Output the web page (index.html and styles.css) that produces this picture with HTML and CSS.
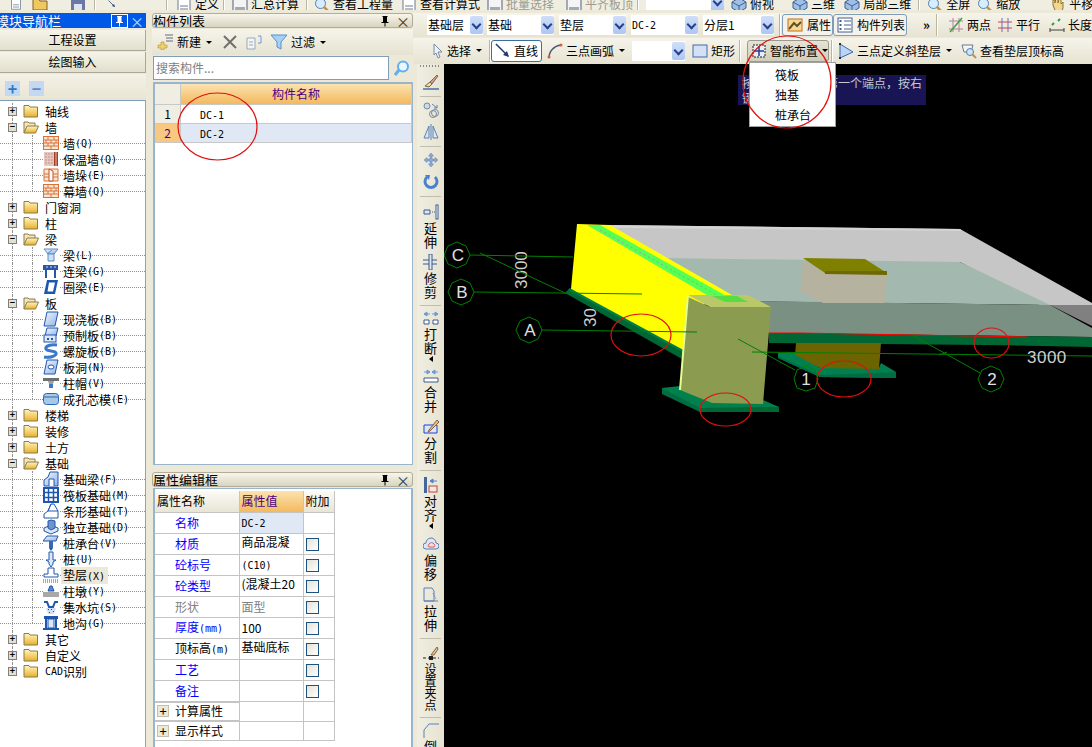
FILE: index.html
```html
<!DOCTYPE html>
<html lang="zh">
<head>
<meta charset="utf-8">
<title>GCL</title>
<link rel="stylesheet" href="styles.css">
</head>
<body>
<svg class="defs" xmlns="http://www.w3.org/2000/svg">
<defs>
<linearGradient id="fy" x1="0" y1="0" x2="0" y2="1"><stop offset="0" stop-color="#fff6c0"/><stop offset="1" stop-color="#e8b028"/></linearGradient>
<linearGradient id="bl" x1="0" y1="0" x2="1" y2="1"><stop offset="0" stop-color="#f4f8ff"/><stop offset="1" stop-color="#8fb2e6"/></linearGradient>
<symbol id="pin" viewBox="0 0 11 12"><path d="M3 1h5v1H7.500v5H9v1H6v3.500H5V8H2V7h1.500V2H3z" fill="currentColor"/></symbol>
<symbol id="folder" viewBox="0 0 16 14"><path d="M1 3V1.500h5L7 3h7.500v10H1z" fill="url(#fy)" stroke="#8a7a50"/></symbol>
<symbol id="folder-open" viewBox="0 0 16 14"><path d="M1 13V2h4l1 1h6v3" fill="#f6e8b8" stroke="#8a7a50"/><path d="M1 13l3-7h11.500l-3 7z" fill="url(#fy)" stroke="#8a7a50"/></symbol>
<symbol id="brick" viewBox="0 0 16 16"><rect x=".5" y="1.500" width="15" height="13" fill="#fbe6d2" stroke="#d8703a"/><path d="M1 5h14M1 8h14M1 11h14M5 1.500V5M11 1.500V5M8 5v3M3 5v3M13 5v3M5 8v3M11 8v3M8 11v3" stroke="#d8703a" fill="none"/></symbol>
<symbol id="i-insul" viewBox="0 0 16 16"><rect x="1" y="1" width="10" height="14" fill="#e6c8c0"/><path d="M3 2v12M6 2v12M9 2v12" stroke="#c09088" stroke-dasharray="2 1"/><rect x="11" y="1" width="4" height="14" fill="#a04020"/><path d="M13 1v14" stroke="#e8c0a0"/></symbol>
<symbol id="i-pier" viewBox="0 0 16 16"><path d="M1 2h14v12H1z" fill="#fbe6d2" stroke="#d8703a"/><path d="M6 2l4 2v10H6z" fill="#fff" stroke="#c05020"/><path d="M1 7h5M10 7h5M1 10h5M10 10h5" stroke="#d8703a"/></symbol>
<symbol id="i-beam" viewBox="0 0 16 16"><path d="M1 2h14l-4 5H5z" fill="url(#bl)" stroke="#5a8cc8"/><path d="M5 7h6v7H5z" fill="#cfe0f6" stroke="#5a8cc8"/><path d="M9 3l-5 4" stroke="#5a8cc8"/></symbol>
<symbol id="i-link" viewBox="0 0 16 16"><rect x="0" y="2" width="15" height="5" fill="#2a56a8"/><path d="M3 4h2M7 4h2M11 4h2" stroke="#cfe0f6"/><path d="M3 7v8M12 7v8" stroke="#2a56a8" stroke-width="2"/></symbol>
<symbol id="i-ring" viewBox="0 0 16 16"><path d="M4 1h11l-3 14H1z" fill="#1f56b0"/><path d="M6 3.500h6l-2 9H4.500z" fill="#fff"/></symbol>
<symbol id="i-slab" viewBox="0 0 16 16"><path d="M4 1h11l-3 14H1z" fill="url(#bl)" stroke="#1f56b0"/></symbol>
<symbol id="i-pre" viewBox="0 0 16 16"><path d="M4 1h11l-2 8H2z" fill="url(#bl)" stroke="#1f56b0"/><rect x="1" y="8" width="12" height="7" fill="#dce8f8" stroke="#1f56b0"/><path d="M4 11h2v2H4zM8 11h2v2H8z" fill="#1f56b0"/></symbol>
<symbol id="i-spiral" viewBox="0 0 16 16"><path d="M14 2C8 1 2 3 3 6s9 1 10 4-6 5-12 4" fill="none" stroke="#3a78c8" stroke-width="3"/></symbol>
<symbol id="i-hole" viewBox="0 0 16 16"><path d="M4 1h11l-3 14H1z" fill="url(#bl)" stroke="#1f56b0"/><ellipse cx="8" cy="8" rx="3" ry="2" fill="#fff" stroke="#1f56b0"/></symbol>
<symbol id="i-cap" viewBox="0 0 16 16"><rect x="0" y="3" width="16" height="3" fill="#707070"/><path d="M5 6h6l-1 3H6z" fill="#a0a0a0"/><rect x="6" y="9" width="4" height="4" fill="#3a78c8"/></symbol>
<symbol id="i-core" viewBox="0 0 16 16"><rect x="0.500" y="2.500" width="15" height="11" rx="3" fill="#a8c8e8" stroke="#2a66b0"/><path d="M1 6h14" stroke="#2a66b0"/></symbol>
<symbol id="i-fbeam" viewBox="0 0 16 16"><path d="M1 15V9l4-3 2-5h8v14z" fill="url(#bl)" stroke="#1f56b0"/><path d="M6 15V8h5v7" fill="#fff" stroke="#1f56b0"/></symbol>
<symbol id="i-raft" viewBox="0 0 16 16"><rect x="1" y="1" width="14" height="14" fill="#fff" stroke="#1f56b0" stroke-width="2"/><path d="M1 5.500h14M1 10.500h14M5.500 1v14M10.500 1v14" stroke="#1f56b0" stroke-width="1.500"/></symbol>
<symbol id="i-strip" viewBox="0 0 16 16"><path d="M1 15v-4l4-3 3-7h3l4 7v7z" fill="#fff" stroke="#1f56b0"/><path d="M8 1l-3 7h10" fill="none" stroke="#1f56b0"/></symbol>
<symbol id="i-iso" viewBox="0 0 16 16"><path d="M1 9l7-3 7 3v3l-7 3-7-3z" fill="#dce8f8" stroke="#1f56b0"/><path d="M5 2l3-1 4 1v7l-4 2-3-2z" fill="#6f94c8" stroke="#1f56b0"/></symbol>
<symbol id="i-pcap" viewBox="0 0 16 16"><path d="M4 1h11l-2 5H0z" fill="url(#bl)" stroke="#1f56b0"/><rect x="6" y="6" width="4" height="7" fill="#3a68b0"/><path d="M6 13h4l-2 3z" fill="#1f56b0"/></symbol>
<symbol id="i-pile" viewBox="0 0 16 16"><path d="M6 1h4v8h3l-3 2v2l-2 3-2-3v-2l-3-2h3z" fill="#dce8f8" stroke="#1f56b0"/></symbol>
<symbol id="i-cush" viewBox="0 0 16 16"><path d="M5 1h6v6h4v3H1V7h4z" fill="#fff" stroke="#1f56b0"/><path d="M0 13h16" stroke="#1f56b0" stroke-dasharray="1 1"/><path d="M0 15h16" stroke="#1f56b0" stroke-dasharray="1 1"/></symbol>
<symbol id="i-cpier" viewBox="0 0 16 16"><path d="M5 8l2-5h2l2 5z" fill="#5a86d0" stroke="#1f56b0"/><rect x="0" y="9" width="16" height="5" fill="#a8a8a8"/></symbol>
<symbol id="i-sump" viewBox="0 0 16 16"><path d="M1 3h3l2 5h4l2-5h3" fill="none" stroke="#1f56b0" stroke-width="2"/><path d="M3 9h10l-2 6H5z" fill="#cfe0f6"/><path d="M5 10l1 1M8 10l1 1M10 12l1 1M6 13l1 1" stroke="#1f56b0"/></symbol>
<symbol id="i-ditch" viewBox="0 0 16 16"><path d="M1 1h14v3H1zM0 13h16v2H0z" fill="#1f56b0"/><path d="M3 4v9M13 4v9" stroke="#1f56b0" stroke-width="2"/><rect x="5" y="4" width="6" height="9" fill="#dce8f8" stroke="#1f56b0"/></symbol>
<symbol id="t-doc" viewBox="0 0 16 16"><path d="M2 1h12v14H2z" fill="#fff" stroke="#6a7a90"/><path d="M4 9h8M4 12h8" stroke="#6a7a90"/></symbol>
<symbol id="t-folder" viewBox="0 0 16 16"><path d="M1 5V2h5l2 3h7v9H1z" fill="#f0c860" stroke="#806020"/></symbol>
<symbol id="t-save" viewBox="0 0 16 16"><path d="M1 1h14v14H1z" fill="#6a78a8"/><rect x="4" y="8" width="8" height="7" fill="#dfe4f0"/></symbol>
<symbol id="t-calc" viewBox="0 0 16 16"><rect x="1" y="1" width="14" height="14" fill="#f4f4f4" stroke="#506080"/><path d="M3 11h10M3 13h10" stroke="#506080"/></symbol>
<symbol id="t-3d" viewBox="0 0 16 16"><path d="M8 1l7 4v6l-7 4-7-4V5z" fill="#9ec0e8" stroke="#406090"/><path d="M1 5l7 4 7-4M8 9v6" stroke="#406090" fill="none"/></symbol>
<symbol id="t-zoom" viewBox="0 0 16 16"><circle cx="6.500" cy="6.500" r="5" fill="#d8ecff" stroke="#5080b0"/><path d="M10 10l5 5" stroke="#c89040" stroke-width="2.500"/></symbol>
<symbol id="t-hand" viewBox="0 0 16 16"><path d="M3 8V3l2 0v3l1-5h2v5l1-4h2v5l2-2v6l-2 5H6z" fill="#f0d890" stroke="#907030"/></symbol>
<symbol id="t-prop" viewBox="0 0 16 16"><rect x="1" y="2" width="14" height="12" fill="#f8d890" stroke="#c07020"/><path d="M2 12l5-6 3 3 4-4" stroke="#605030" stroke-width="2" fill="none"/></symbol>
<symbol id="t-list" viewBox="0 0 16 16"><rect x="1" y="1" width="14" height="14" fill="#fff" stroke="#406090"/><path d="M2.500 4h2M2.500 8h2M2.500 12h2" stroke="#406090" stroke-width="2"/><path d="M7 4h7M7 8h7M7 12h7" stroke="#406090"/></symbol>
<symbol id="t-two" viewBox="0 0 16 16"><path d="M1 4h14M1 12h14M5 1v14M11 1v14" stroke="#b080a0" fill="none"/><path d="M2 15L14 1" stroke="#40a040" stroke-width="1.500"/></symbol>
<symbol id="t-par" viewBox="0 0 16 16"><path d="M1 5h14M1 11h14" stroke="#d04040"/><path d="M5 1v14M11 1v14" stroke="#6a70c0"/></symbol>
<symbol id="t-len" viewBox="0 0 16 16"><path d="M1 11v4M15 11v4M1 13h14" stroke="#404040" fill="none"/><path d="M3 8l2-2M9 4l2-2" stroke="#20a040" stroke-width="2"/></symbol>
<symbol id="t-select" viewBox="0 0 16 16"><path d="M4 1l8 8H8l2 5-2 1-2-5-2 2z" fill="#eef2fa" stroke="#7a8aa8"/></symbol>
<symbol id="t-line" viewBox="0 0 16 16"><path d="M1 1l12 12" stroke="#1c3c70" stroke-width="1.500"/><path d="M14 14l-6-2 4-4z" fill="#1c3c70"/></symbol>
<symbol id="t-arc" viewBox="0 0 16 16"><path d="M2 15C2 8 7 3 14 2" fill="none" stroke="#505a70" stroke-width="1.500"/><circle cx="2" cy="14" r="1.500" fill="#d06040"/><circle cx="14" cy="2" r="1.500" fill="#d06040"/></symbol>
<symbol id="t-rect" viewBox="0 0 16 16"><rect x="1" y="2" width="14" height="12" fill="#d4e0f6" stroke="#406ab0"/></symbol>
<symbol id="t-smart" viewBox="0 0 16 16"><rect x="2" y="2" width="12" height="12" fill="#e8eef8" stroke="#202020" stroke-dasharray="2 1"/><path d="M8 3v10M3 8h10" stroke="#204090" stroke-width="1.500"/></symbol>
<symbol id="t-tri" viewBox="0 0 16 16"><path d="M2 1l13 8-13 6z" fill="#bcd4f4" stroke="#3a68b0"/><rect x="1" y="0" width="2" height="2" fill="#303030"/><rect x="1" y="14" width="2" height="2" fill="#303030"/></symbol>
<symbol id="t-view" viewBox="0 0 16 16"><path d="M1 2h11l-2 7H3z" fill="#f4f4f4" stroke="#6a7a90"/><circle cx="9" cy="9" r="3.500" fill="#cfe4fa" stroke="#5080b0"/><path d="M11.500 11.500L15 15" stroke="#c89040" stroke-width="2"/></symbol>
<symbol id="v-brush" viewBox="0 0 16 16"><path d="M14 1l-7 7 2 2 6-8z" fill="#d0a060" stroke="#8060a0"/><path d="M7 8l-5 4 4 1 3-3z" fill="#f0e0a0" stroke="#806040"/><path d="M0 15h16" stroke="#4a70a8" stroke-width="1.500"/></symbol>
<symbol id="v-circ" viewBox="0 0 16 16"><circle cx="4" cy="4" r="3" fill="#ccd8ea" stroke="#7a8aa0"/><circle cx="10" cy="12" r="3.500" fill="none" stroke="#7a8aa0"/><circle cx="12" cy="11" r="3.500" fill="none" stroke="#7a8aa0"/><path d="M9 2l5 4M14 3v3h-3" stroke="#6080b0" fill="none"/></symbol>
<symbol id="v-mirror" viewBox="0 0 16 16"><path d="M6 2L1 14h5zM10 2l5 12h-5z" fill="#dbe6f6" stroke="#5a80b8"/><path d="M8 0v16" stroke="#5a80b8"/></symbol>
<symbol id="v-move" viewBox="0 0 16 16"><path d="M8 1l2.500 3H9v3h3V5.500L15 8l-3 2.500V9H9v3h1.500L8 15l-2.500-3H7V9H4v1.500L1 8l3-2.500V7h3V4H5.500z" fill="#8aa8d0" stroke="#6080b0" stroke-width=".5"/></symbol>
<symbol id="v-rot" viewBox="0 0 16 16"><path d="M4 3a6 6 0 1 0 8 0" fill="none" stroke="#4a80d0" stroke-width="3"/><path d="M2 1l5 0-1 5z" fill="#4a80d0"/></symbol>
<symbol id="v-ext" viewBox="0 0 16 16"><path d="M1 6h6v4H1z" fill="#dbe6f6" stroke="#3a5a90"/><path d="M9 8h3" stroke="#3a5a90" stroke-dasharray="1 1"/><rect x="13" y="1" width="2" height="14" fill="#fff" stroke="#3a5a90"/></symbol>
<symbol id="v-trim" viewBox="0 0 16 16"><path d="M0 6h14M0 10h14" stroke="#3a5a90"/><rect x="6" y="0" width="3" height="16" fill="#dbe6f6" stroke="#3a5a90"/></symbol>
<symbol id="v-break" viewBox="0 0 16 16"><path d="M7 4L1 4M1 4l3-2v4zM9 4h6M15 4l-3-2v4z" fill="#6a9ad8" stroke="#6a9ad8"/><path d="M1 10h5v4H1zM10 10h5v4h-5z" fill="#fff" stroke="#3a5a90"/></symbol>
<symbol id="v-merge" viewBox="0 0 16 16"><path d="M1 4h6M7 4L4 2v4zM15 4H9M9 4l3-2v4z" fill="#6a9ad8" stroke="#6a9ad8"/><path d="M1 10h14v4H1z" fill="#fff" stroke="#3a5a90"/></symbol>
<symbol id="v-split" viewBox="0 0 16 16"><path d="M1 6h13v8H1z" fill="#dbe6f6" stroke="#2040d0"/><path d="M14 1L6 11l-1 2 2-1 9-9z" fill="#f0c080" stroke="#806040"/></symbol>
<symbol id="v-align" viewBox="0 0 16 16"><rect x="1" y="0" width="3" height="16" fill="#40689a"/><path d="M14 4H7M7 4l3-2v4z" stroke="#5a80c8" fill="#5a80c8"/><rect x="6" y="9" width="8" height="6" fill="#f8e8e0" stroke="#c04040"/></symbol>
<symbol id="v-off" viewBox="0 0 16 16"><path d="M3 13a3 3 0 0 1 0-6 5 5 0 0 1 10 0 3 3 0 0 1 0 6z" fill="#dbe6f6" stroke="#5a80b8"/><path d="M6 11a2 2 0 0 1 0-3 3 3 0 0 1 5 0 2 2 0 0 1 0 3z" fill="#f8dcd8" stroke="#d06060"/></symbol>
<symbol id="v-stretch" viewBox="0 0 16 16"><path d="M1 1h8l2 3v10H1zM1 14h14" fill="none" stroke="#5a80b8"/><path d="M10 6l3 6" stroke="#5a80b8" stroke-dasharray="1 1"/></symbol>
<symbol id="v-grip" viewBox="0 0 16 16"><path d="M0 12h16" stroke="#202020" stroke-dasharray="3 2"/><rect x="6" y="10" width="4" height="4" fill="#202020"/><path d="M14 1L8 9l3 0 4-6z" fill="#e8c890" stroke="#806040"/></symbol>
<symbol id="v-chamfer" viewBox="0 0 16 16"><path d="M1 16V8l5-6h10" fill="none" stroke="#5a80b8"/></symbol>
</defs>
</svg>

<div class="app">
  <header class="topbar">
    <svg class="ti w12 ml-10"><use href="#t-doc"/></svg>
    <svg class="ti ml-10"><use href="#t-folder"/></svg>
    <svg class="ti ml-22"><use href="#t-save"/></svg>
    <i class="sep ml-8"></i>
    <svg class="ti w8 ml-12"><use href="#t-line"/></svg>
    <i class="sep ml-50"></i>
    <span class="tool ml-8"><svg class="ti"><use href="#t-doc"/></svg>定义</span>
    <i class="sep ml-4"></i>
    <span class="tool ml-7"><svg class="ti"><use href="#t-calc"/></svg>汇总计算</span>
    <i class="sep ml-7"></i>
    <span class="tool ml-6"><svg class="ti"><use href="#t-zoom"/></svg>查看工程量</span>
    <span class="tool ml-8"><svg class="ti"><use href="#t-doc"/></svg>查看计算式</span>
    <span class="tool off ml-7"><svg class="ti"><use href="#t-calc"/></svg>批量选择</span>
    <span class="tool off ml-12"><svg class="ti"><use href="#t-calc"/></svg>平齐板顶</span>
    <i class="sep ml-4"></i>
    <span class="combo topcombo ml-7"><b></b><span class="caret"></span></span>
    <span class="tool ml-7"><svg class="ti"><use href="#t-3d"/></svg>俯视</span>
    <span class="tool ml-18"><svg class="ti"><use href="#t-3d"/></svg>三维</span>
    <span class="tool ml-9"><svg class="ti"><use href="#t-3d"/></svg>局部三维</span>
    <i class="sep ml-7"></i>
    <span class="tool ml-7"><svg class="ti"><use href="#t-zoom"/></svg>全屏</span>
    <span class="tool ml-7"><svg class="ti"><use href="#t-zoom"/></svg>缩放</span>
    <span class="tool ml-30"><svg class="ti"><use href="#t-hand"/></svg>平移</span>
  </header>

  <div class="main">
    <aside class="nav">
      <div class="title active"><span class="title-text shifted">模块导航栏</span><svg class="pin boxed"><use href="#pin"/></svg><span class="close">×</span></div>
      <div class="navbtn first">工程设置</div>
      <div class="navbtn">绘图输入</div>
      <div class="navtools"><span class="sq">+</span><span class="sq">−</span></div>
      <div class="tree">
        <div class="row"><i class="tog">+</i><svg class="fd"><use href="#folder"/></svg>轴线</div>
        <div class="row"><i class="tog">−</i><svg class="fd"><use href="#folder-open"/></svg>墙</div>
        <div class="row child"><svg class="ic"><use href="#brick"/></svg>墙<span class="m">(Q)</span></div>
        <div class="row child"><svg class="ic"><use href="#i-insul"/></svg>保温墙<span class="m">(Q)</span></div>
        <div class="row child"><svg class="ic"><use href="#i-pier"/></svg>墙垛<span class="m">(E)</span></div>
        <div class="row child last"><svg class="ic"><use href="#brick"/></svg>幕墙<span class="m">(Q)</span></div>
        <div class="row"><i class="tog">+</i><svg class="fd"><use href="#folder"/></svg>门窗洞</div>
        <div class="row"><i class="tog">+</i><svg class="fd"><use href="#folder"/></svg>柱</div>
        <div class="row"><i class="tog">−</i><svg class="fd"><use href="#folder-open"/></svg>梁</div>
        <div class="row child"><svg class="ic"><use href="#i-beam"/></svg>梁<span class="m">(L)</span></div>
        <div class="row child"><svg class="ic"><use href="#i-link"/></svg>连梁<span class="m">(G)</span></div>
        <div class="row child last"><svg class="ic"><use href="#i-ring"/></svg>圈梁<span class="m">(E)</span></div>
        <div class="row"><i class="tog">−</i><svg class="fd"><use href="#folder-open"/></svg>板</div>
        <div class="row child"><svg class="ic"><use href="#i-slab"/></svg>现浇板<span class="m">(B)</span></div>
        <div class="row child"><svg class="ic"><use href="#i-pre"/></svg>预制板<span class="m">(B)</span></div>
        <div class="row child"><svg class="ic"><use href="#i-spiral"/></svg>螺旋板<span class="m">(B)</span></div>
        <div class="row child"><svg class="ic"><use href="#i-hole"/></svg>板洞<span class="m">(N)</span></div>
        <div class="row child"><svg class="ic"><use href="#i-cap"/></svg>柱帽<span class="m">(V)</span></div>
        <div class="row child last"><svg class="ic"><use href="#i-core"/></svg>成孔芯模<span class="m">(E)</span></div>
        <div class="row"><i class="tog">+</i><svg class="fd"><use href="#folder"/></svg>楼梯</div>
        <div class="row"><i class="tog">+</i><svg class="fd"><use href="#folder"/></svg>装修</div>
        <div class="row"><i class="tog">+</i><svg class="fd"><use href="#folder"/></svg>土方</div>
        <div class="row"><i class="tog">−</i><svg class="fd"><use href="#folder-open"/></svg>基础</div>
        <div class="row child"><svg class="ic"><use href="#i-fbeam"/></svg>基础梁<span class="m">(F)</span></div>
        <div class="row child"><svg class="ic"><use href="#i-raft"/></svg>筏板基础<span class="m">(M)</span></div>
        <div class="row child"><svg class="ic"><use href="#i-strip"/></svg>条形基础<span class="m">(T)</span></div>
        <div class="row child"><svg class="ic"><use href="#i-iso"/></svg>独立基础<span class="m">(D)</span></div>
        <div class="row child"><svg class="ic"><use href="#i-pcap"/></svg>桩承台<span class="m">(V)</span></div>
        <div class="row child"><svg class="ic"><use href="#i-pile"/></svg>桩<span class="m">(U)</span></div>
        <div class="row child"><svg class="ic"><use href="#i-cush"/></svg><span class="picked">垫层<span class="m">(X)</span></span></div>
        <div class="row child"><svg class="ic"><use href="#i-cpier"/></svg>柱墩<span class="m">(Y)</span></div>
        <div class="row child"><svg class="ic"><use href="#i-sump"/></svg>集水坑<span class="m">(S)</span></div>
        <div class="row child last"><svg class="ic"><use href="#i-ditch"/></svg>地沟<span class="m">(G)</span></div>
        <div class="row"><i class="tog">+</i><svg class="fd"><use href="#folder"/></svg>其它</div>
        <div class="row"><i class="tog">+</i><svg class="fd"><use href="#folder"/></svg>自定义</div>
        <div class="row end"><i class="tog">+</i><svg class="fd"><use href="#folder"/></svg><span class="m">CAD</span>识别</div>
      </div>
    </aside>

    <section class="mid">
      <div class="title"><span class="title-text">构件列表</span><svg class="pin"><use href="#pin"/></svg><span class="close">×</span></div>
      <div class="listtools">
        <svg class="ti" viewBox="0 0 16 16"><path d="M8 1h8M9 4h7M9 7h7" stroke="#606880" fill="none"/><path d="M4 8h3v3h3v3H7v2H4v-2H1v-3h3z" fill="#f4d060" stroke="#a08020" stroke-width=".5"/></svg>
        <span class="lt-label">新建</span><span class="dn"></span>
        <svg class="ti ml-10" viewBox="0 0 16 16"><path d="M2 2l12 12M14 2L2 14" stroke="#707070" stroke-width="2"/></svg>
        <svg class="ti ml-8" viewBox="0 0 16 16"><path d="M1 4h8v11H1z" fill="#f4f4f4" stroke="#9aa8b8"/><path d="M3 8h4M3 11h4" stroke="#9aa8b8"/><path d="M12 2h3v7h-3" fill="none" stroke="#6a98d8"/></svg>
        <svg class="ti ml-9" viewBox="0 0 16 16"><path d="M0 1h16l-6 7v7l-4-2V8z" fill="#a8d0f4" stroke="#5a90c8"/></svg>
        <span class="lt-label">过滤</span><span class="dn"></span>
      </div>
      <div class="searchrow">
        <div class="search">搜索构件...</div>
        <svg class="ti" viewBox="0 0 16 16"><circle cx="9" cy="6.500" r="5" fill="#e8f6ff" stroke="#60b0f0" stroke-width="2"/><path d="M5 10l-4 5" stroke="#60b0f0" stroke-width="3"/></svg>
      </div>
      <div class="listbox">
        <div class="lrow head"><span class="num"></span><span class="cell">构件名称</span></div>
        <div class="lrow"><span class="num">1</span><span class="cell val"><span class="m">DC-1</span></span></div>
        <div class="lrow sel"><span class="num">2</span><span class="cell val"><span class="m">DC-2</span></span></div>
      </div>
      <div class="title props-title"><span class="title-text">属性编辑框</span><svg class="pin"><use href="#pin"/></svg><span class="close">×</span></div>
      <div class="propbox">
        <table class="props">
          <colgroup><col class="c1"><col class="c2"><col class="c3"></colgroup>
          <tr class="ph"><th>属性名称</th><th class="hot">属性值</th><th>附加</th></tr>
          <tr><td class="n blue">名称</td><td class="v picked-cell"><span class="m">DC-2</span></td><td></td></tr>
          <tr><td class="n blue">材质</td><td class="v up">商品混凝</td><td><i class="cb"></i></td></tr>
          <tr><td class="n blue">砼标号</td><td class="v"><span class="m">(C10)</span></td><td><i class="cb"></i></td></tr>
          <tr><td class="n blue">砼类型</td><td class="v up">(混凝土20</td><td><i class="cb"></i></td></tr>
          <tr><td class="n gray">形状</td><td class="v gray">面型</td><td><i class="cb"></i></td></tr>
          <tr><td class="n blue">厚度<span class="m">(mm)</span></td><td class="v">100</td><td><i class="cb"></i></td></tr>
          <tr><td class="n">顶标高<span class="m">(m)</span></td><td class="v up">基础底标</td><td><i class="cb"></i></td></tr>
          <tr><td class="n blue">工艺</td><td></td><td><i class="cb"></i></td></tr>
          <tr><td class="n blue">备注</td><td></td><td><i class="cb"></i></td></tr>
          <tr class="grp"><td class="g"><i class="pl">+</i>计算属性</td><td></td><td></td></tr>
          <tr class="grp"><td class="g"><i class="pl">+</i>显示样式</td><td></td><td></td></tr>
        </table>
      </div>
    </section>

    <section class="work">
      <div class="rbar r1">
        <span class="combo w56"><b>基础层</b><span class="caret"></span></span>
        <span class="combo w67 ml-4"><b>基础</b><span class="caret"></span></span>
        <span class="combo w67 ml-5"><b>垫层</b><span class="caret"></span></span>
        <span class="combo w67 ml-5"><b><span class="m">DC-2</span></b><span class="caret"></span></span>
        <span class="combo w71 ml-5"><b>分层1</b><span class="caret"></span></span>
        <i class="sep ml-5"></i>
        <span class="tbtn b51"><svg class="ti"><use href="#t-prop"/></svg>属性</span>
        <span class="tbtn b74"><svg class="ti"><use href="#t-list"/></svg>构件列表</span>
        <span class="more ml-16">»</span>
        <i class="sep ml-6"></i>
        <span class="tool ml-10"><svg class="ti"><use href="#t-two"/></svg>两点</span>
        <span class="tool ml-6"><svg class="ti"><use href="#t-par"/></svg>平行</span>
        <span class="tool ml-9"><svg class="ti"><use href="#t-len"/></svg>长度</span>
      </div>
      <div class="rbar r2">
        <svg class="ti"><use href="#t-select"/></svg>
        <span class="lbl">选择</span><span class="dn ml-12"></span>
        <i class="sep ml-7"></i>
        <span class="tbtn on"><svg class="ti"><use href="#t-line"/></svg>直线</span>
        <span class="tool ml-5"><svg class="ti"><use href="#t-arc"/></svg>三点画弧</span>
        <span class="dn ml-7"></span>
        <span class="combo w53 ml-7"><b></b><span class="caret"></span></span>
        <span class="tool ml-7"><svg class="ti"><use href="#t-rect"/></svg>矩形</span>
        <i class="sep ml-4"></i>
        <span class="tbtn smart ml-6"><svg class="ti"><use href="#t-smart"/></svg>智能布置<span class="dn"></span></span>
        <i class="sep ml-2"></i>
        <span class="tool ml-5"><svg class="ti"><use href="#t-tri"/></svg>三点定义斜垫层</span>
        <span class="dn ml-7"></span>
        <span class="tool ml-9"><svg class="ti"><use href="#t-view"/></svg>查看垫层顶标高</span>
      </div>
      <div class="stage">
        <nav class="vbar">
          <i class="vgrip"></i>
          <span class="vb mt-7"><svg class="vi"><use href="#v-brush"/></svg></span>
          <i class="vsep"></i>
          <span class="vb mt-5"><svg class="vi"><use href="#v-circ"/></svg></span>
          <span class="vb mt-6"><svg class="vi"><use href="#v-mirror"/></svg></span>
          <i class="vsep"></i>
          <span class="vb mt-5"><svg class="vi"><use href="#v-move"/></svg></span>
          <span class="vb mt-6"><svg class="vi"><use href="#v-rot"/></svg></span>
          <i class="vsep"></i>
          <span class="vb mt-7"><svg class="vi"><use href="#v-ext"/></svg><b>延伸</b></span>
          <span class="vb mt-5"><svg class="vi"><use href="#v-trim"/></svg><b>修剪</b></span>
          <i class="vsep"></i>
          <span class="vb mt-4"><svg class="vi"><use href="#v-break"/></svg><b>打断</b><em></em></span>
          <span class="vb mt-6"><svg class="vi"><use href="#v-merge"/></svg><b>合并</b></span>
          <span class="vb mt-6"><svg class="vi"><use href="#v-split"/></svg><b>分割</b></span>
          <i class="vsep"></i>
          <span class="vb mt-6"><svg class="vi"><use href="#v-align"/></svg><b>对齐</b><em></em></span>
          <span class="vb mt-7"><svg class="vi"><use href="#v-off"/></svg><b>偏移</b></span>
          <span class="vb mt-6"><svg class="vi"><use href="#v-stretch"/></svg><b>拉伸</b></span>
          <i class="vsep"></i>
          <span class="vb mt-7"><svg class="vi"><use href="#v-grip"/></svg><b class="tight">设置夹点</b></span>
          <i class="vsep"></i>
          <span class="vb mt-4"><svg class="vi"><use href="#v-chamfer"/></svg><b>倒角</b></span>
        </nav>
        <div class="canvas">
          <svg class="scene" viewBox="444 64 648 683" xmlns="http://www.w3.org/2000/svg">
            <!-- top slab; left edges run under the wall -->
            <polygon points="600,225 960,229 1092,303 1092,306 1040,305 960,262 640,262" fill="#c6c6c6"/>
            <polygon points="610,225 960,229 962,231 612,228" fill="#d4d4d4"/>
            <polygon points="660,258 960,262 1050,305 720,301" fill="#a3b8ae"/>
            <polygon points="740,301 1050,305 1092,328 1092,337 769,333 760,320" fill="#7a9083"/>
            <polygon points="1050,305 1092,305 1092,326" fill="#808080"/>
            <polygon points="769,333 1092,337 1092,347 985,345 769,343" fill="#006633"/>
            <polyline points="769,333 800,333 1028,337" fill="none" stroke="#ff0000" stroke-width="1"/>
            <!-- inner upper box -->
            <polygon points="803,260 825,273 887,273 885,303 823,303 800,291" fill="#b5b2a0"/>
            <polygon points="803,258 865,259 887,273 825,273" fill="#808000"/>
            <polygon points="825,271 887,271 887,275 825,274" fill="#6e6800"/>
            <!-- lower box and footing -->
            <polygon points="778,353 796,353 820,368 879,368 881,363 896,372 896,378 820,377 778,358" fill="#008050"/>
            <polygon points="778,356 820,375 896,372 896,378 820,377 778,358" fill="#006e42"/>
            <polygon points="796,343 881,343 879,369 820,368 795,355" fill="#6b6400"/>
            <!-- labels under the wall -->
            <text class="dim" transform="translate(527 289) rotate(-90)">3000</text>
            <text class="dim" transform="translate(596 327) rotate(-90)">30</text>
            <!-- yellow wall -->
            <polygon points="577,224 610,225 746,303 690,305 682,357 571,289" fill="#ffff00"/>
            <polygon points="587,225 600,225 737,302 712,298" fill="#55ff55"/>
            <polyline points="600,230 722,298" fill="none" stroke="#a0a0a0" stroke-dasharray="2 3"/>
            <polygon points="565,293 569,289 683,351 682,359" fill="#006633"/>
            <polyline points="569,289 683,351" fill="none" stroke="#008048" stroke-width="2"/>
            <!-- column footing -->
            <polygon points="662,388 680,388 779,407 779,412 700,412 662,394" fill="#006e42"/>
            <polygon points="662,388 680,386 763,400 779,407 700,408" fill="#00804c"/>
            <polygon points="700,408 779,407 779,412 700,412" fill="#006633"/>
            <!-- column -->
            <polygon points="688,297 710,307 771,307 763,404 712,403 680,390" fill="#8b9b50"/>
            <polygon points="688,295 748,295 771,307 710,307" fill="#b9c96a"/>
            <polyline points="688,295 680,390" fill="none" stroke="#e6ff90" stroke-width="2"/>
            <polygon points="712,296 737,296 748,302 725,302" fill="#55dd44"/>
            <!-- grid lines -->
            <g fill="none" stroke="#008000" stroke-width="1">
              <polyline points="470,255 573,257"/>
              <polyline points="480,253 565,293"/>
              <polyline points="474,292 642,294"/>
              <polyline points="542,330 697,332"/>
              <polyline points="738,339 795,370"/>
              <polyline points="752,352 1092,356"/>
              <polyline points="912,335 980,373"/>
              <polyline points="939,355 947,352"/>
              <polygon points="457,242 466,246 470,255 466,264 457,268 448,264 444,255 448,246"/>
              <polygon points="461,279 470,283 474,292 470,301 461,305 452,301 448,292 452,283"/>
              <polygon points="529,317 538,321 542,330 538,339 529,343 520,339 516,330 520,321"/>
              <polygon points="806,366 815,370 818,379 815,388 806,391 797,388 794,379 797,370"/>
              <polygon points="991,366 1000,370 1004,379 1000,388 991,392 982,388 978,379 982,370"/>
            </g>
            <text class="axis" x="458" y="261">C</text>
            <text class="axis" x="462" y="298">B</text>
            <text class="axis" x="530" y="336">A</text>
            <text class="axis" x="806" y="385">1</text>
            <text class="axis" x="992" y="385">2</text>
            <text class="dim wide" x="1027" y="363">3000</text>
            <!-- markup -->
            <g fill="none" stroke="#e01010" stroke-width="1.200">
              <ellipse cx="641" cy="335" rx="30" ry="21"/>
              <ellipse cx="725.500" cy="409.500" rx="25.500" ry="16.500"/>
              <ellipse cx="844" cy="379" rx="27" ry="18"/>
              <ellipse cx="991.500" cy="343" rx="17.500" ry="15"/>
            </g>
          </svg>
          <div class="tip">按鼠标左键指定第一个端点，按右键或ESC退出</div>
        </div>
      </div>
    </section>
  </div>

  <div class="menu">
    <div>筏板</div>
    <div>独基</div>
    <div>桩承台</div>
  </div>
  <svg class="markup" viewBox="0 0 1092 747" xmlns="http://www.w3.org/2000/svg">
    <ellipse cx="217.500" cy="126.500" rx="39.500" ry="33.500"/>
    <ellipse cx="787" cy="82" rx="44" ry="46"/>
  </svg>
</div>
</body>
</html>
```
FILE: styles.css
```css
* { box-sizing: border-box; }
html, body { margin: 0; padding: 0; }
body {
  width: 1092px;
  height: 747px;
  overflow: hidden;
  background: #ece9d8;
  color: #000;
  font-family: "Noto Sans CJK SC", "Liberation Sans", sans-serif;
  font-size: 12px;
  line-height: 16px;
}
i, em { font-style: normal; }
.defs { position: absolute; width: 0; height: 0; }
.app { position: relative; width: 1092px; height: 747px; overflow: hidden; }
.m { font-family: "DejaVu Sans Mono", monospace; font-size: 10px; }

.ml-2 { margin-left: 2px; } .ml-4 { margin-left: 4px; } .ml-5 { margin-left: 5px; }
.ml-6 { margin-left: 6px; } .ml-7 { margin-left: 7px; } .ml-8 { margin-left: 8px; }
.ml-9 { margin-left: 9px; } .ml-10 { margin-left: 10px; } .ml-12 { margin-left: 12px; }
.ml-16 { margin-left: 16px; } .ml-18 { margin-left: 18px; } .ml-22 { margin-left: 22px; }
.ml-30 { margin-left: 30px; } .ml-50 { margin-left: 50px; }
.mt-4 { margin-top: 4px; } .mt-5 { margin-top: 5px; } .mt-6 { margin-top: 6px; } .mt-7 { margin-top: 7px; }

.ti { width: 16px; height: 16px; flex: none; display: block; }
.ti.w12 { width: 12px; }
.ti.w8 { width: 8px; }
.sep { width: 2px; height: 22px; flex: none; border-left: 1px solid #b8b5a0; border-right: 1px solid #fff; }
.tool { display: flex; align-items: center; gap: 3px; flex: none; white-space: nowrap; }
.tool.off { color: #9a9a90; }
.dn { width: 0; height: 0; flex: none; margin-left: 5px; border: 3px solid transparent; border-top: 3px solid #000; border-bottom: 0; }

/* top clipped toolbar */
.topbar {
  height: 10px;
  display: flex;
  align-items: flex-end;
  overflow: hidden;
  font-size: 12px;
  background: #f0eee0;
}
.topbar .tool, .topbar .ti, .topbar .combo { margin-bottom: -2px; }
.topcombo { width: 78px; height: 18px; }

.main { display: flex; height: 737px; padding-top: 3px; }

/* panel titles */
.title {
  height: 15px;
  display: flex;
  align-items: center;
  flex: none;
  font-size: 13px;
  line-height: 15px;
  border: 1px solid #b0ad98;
  border-radius: 3px;
  background: linear-gradient(#f8f6ec, #d8d4c0);
  overflow: hidden;
}
.title.active { background: #0058e6; color: #fff; border: 0; border-radius: 0; }
.title-text { flex: 1; white-space: nowrap; }
.shifted { margin-left: -4px; }
.pin { width: 18px; height: 12px; flex: none; color: #000; }
.pin.boxed { width: 17px; height: 14px; color: #fff; border: 1px solid #fff; }
.close { width: 18px; margin-left: 0; text-align: center; font-size: 14px; line-height: 14px; color: inherit; opacity: .75; }

/* navigator */
.nav { width: 146px; display: flex; flex-direction: column; flex: none; }
.navbtn {
  height: 21px;
  margin-bottom: 1px;
  flex: none;
  text-align: center;
  line-height: 20px;
  font-size: 12px;
  background: linear-gradient(#f6f4ea, #e2dfcc);
  border-bottom: 1px solid #aca899;
  border-right: 1px solid #aca899;
}
.navbtn.first { margin-top: 2px; }
.navtools { height: 26px; flex: none; display: flex; gap: 9px; align-items: center; padding: 2px 0 0 5px; background: linear-gradient(#f4f2e6, #e8e5d4); }
.sq { width: 15px; height: 15px; background: #c4d8f4; color: #2a7ac0; font-weight: 700; font-size: 16px; line-height: 14px; text-align: center; }
.sq + .sq { color: #6a88b0; }
.tree { flex: 1; background: #fff; border-top: 1px solid #7f9db9; border-right: 1px solid #8ea4bc; padding-top: 2px; }
.row { position: relative; height: 16px; display: flex; align-items: center; white-space: nowrap; line-height: 15px; }
.row::before { content: ""; position: absolute; left: 12px; top: 0; bottom: 0; border-left: 1px dotted #909090; }
.row.end::before { bottom: 8px; }
.tog {
  position: relative;
  z-index: 1;
  width: 9px;
  height: 9px;
  margin-left: 8px;
  flex: none;
  background: #e4e0d0;
  border: 1px solid #808080;
  font-size: 9px;
  line-height: 6px;
  text-align: center;
  font-weight: 700;
  overflow: hidden;
}
.fd { width: 16px; height: 14px; margin: 0 6px 0 6px; flex: none; }
.ic { width: 16px; height: 16px; margin: 0 4px 0 43px; flex: none; position: relative; z-index: 1; background: #fff; }
.child::after { content: ""; position: absolute; left: 32px; top: 0; bottom: 0; width: 11px; border-left: 1px dotted #909090; }
.child.last::after { bottom: 8px; }
.child { background-image: linear-gradient(to right, #909090 50%, transparent 50%); background-size: 2px 1px; background-repeat: repeat-x; background-position: 32px 8px; }
.picked { background: #ece9d8; padding: 0 3px 0 2px; margin-left: -2px; }

/* middle column */
.mid { width: 261px; margin-left: 6px; flex: none; display: flex; flex-direction: column; }
.listtools { height: 26px; flex: none; margin-top: 1px; display: flex; align-items: center; padding-left: 5px; background: linear-gradient(#f6f4ea, #e6e3d2); }
.lt-label { margin-left: 4px; font-size: 12px; }
.searchrow { height: 25px; flex: none; display: flex; align-items: center; gap: 5px; margin-left: 1px; }
.search { width: 236px; height: 24px; background: #fff; border: 1px solid #7f9db9; color: #808080; padding-left: 2px; line-height: 22px; font-size: 12px; }
.listbox { height: 383px; flex: none; margin: 2px 0 0 1px; background: #fff; border: 2px solid #9ab4cc; border-width: 2px 1px 1px 2px; }
.lrow { display: flex; height: 19px; border-bottom: 1px solid #c8c8c8; border-right: 1px solid #c8c8c8; }
.lrow.head { height: 21px; }
.num { width: 26px; flex: none; text-align: center; background: #f0eee2; border-right: 1px solid #c8c8c8; line-height: 18px; }
.cell { flex: 1; line-height: 18px; }
.head .cell { text-align: center; color: #4b0082; background: linear-gradient(#fbe3b0, #f3b95d); line-height: 20px; }
.val { padding-left: 19px; }
.sel .num { background: #f8c880; color: #4b0082; }
.sel .cell { background: #dfe8f4; }

.props-title { margin-top: 7px; }
.propbox { flex: 1; margin: 1px 0 0 1px; background: #fff; border-left: 2px solid #9ab4cc; border-right: 2px solid #9ab4cc; border-top: 1px solid #9ab4cc; padding-top: 2px; }
.props { border-collapse: collapse; table-layout: fixed; width: 179px; }
.c1 { width: 84px; } .c2 { width: 64px; } .c3 { width: 31px; }
.props th, .props td { border: 1px solid #c4c4c4; padding: 0; height: 21px; font-weight: 400; overflow: hidden; white-space: nowrap; line-height: 16px; }
.props tr:first-child th { border-top: 0; border-left: 0; text-align: left; padding-left: 2px; background: linear-gradient(#fbfaf4, #e8e5d6); }
.props tr:first-child th.hot { background: linear-gradient(#fbe3b0, #f3b95d); color: #4b0082; padding-left: 2px; }
.props td:first-child { border-left: 0; }
.n { padding-left: 20px !important; }
.v { padding-left: 2px !important; }
.up { vertical-align: top; }
.blue { color: #0000ff; }
.gray { color: #808080; }
.picked-cell { background: #dfe8f4; }
.cb { display: block; width: 13px; height: 13px; margin: 1px 0 0 2px; border: 1px solid #1c5180; background: linear-gradient(135deg, #e4e2d6, #fff); }
.grp td { height: 19.500px; }
.g { padding-left: 2px !important; display: flex; align-items: center; gap: 6px; border-right: 0 !important; }
.pl { width: 12px; height: 12px; flex: none; background: #ece9d8; border: 1px solid #c0c0b0; font-size: 13px; line-height: 10px; text-align: center; }

/* work area */
.work { flex: 1; min-width: 0; display: flex; flex-direction: column; }
.rbar { display: flex; align-items: center; flex: none; white-space: nowrap; overflow: hidden; background: linear-gradient(#f6f4ea, #e6e3d2); font-size: 12px; }
.r1 { height: 24px; padding-left: 14px; }
.r2 { height: 26px; padding: 0 0 1px 17px; margin-top: 1px; }
.lbl { margin-left: 1px; }
.combo { display: flex; height: 20px; flex: none; background: #fff; align-items: center; }
.combo b { flex: 1; font-weight: 400; padding-left: 1px; overflow: hidden; white-space: nowrap; }
.caret { width: 13px; height: 18px; flex: none; position: relative; background: linear-gradient(#d0defa, #aec6f4); border-radius: 2px; }
.caret::after { content: ""; position: absolute; left: 3px; top: 5px; width: 5px; height: 5px; border: solid #24408a; border-width: 0 2px 2px 0; transform: rotate(45deg); }
.w53 { width: 53px; } .w56 { width: 56px; } .w67 { width: 67px; } .w71 { width: 71px; }
.tbtn { display: flex; align-items: center; gap: 3px; height: 22px; padding: 0 3px; flex: none; background: #f4f2ea; border: 1px solid #7f9db9; border-radius: 3px; }
.b51 { width: 51px; margin-left: 1px; gap: 4px; padding-left: 4px; }
.b74 { width: 74px; gap: 4px; padding-left: 3px; }
.tbtn.on { background: #fff; border-color: #3a6ea0; width: 51px; }
.tbtn.smart { background: linear-gradient(#e6e3d4, #d0cdb8); border-color: #9a9a90; width: 82px; gap: 3px; }
.tbtn.smart .dn { margin-left: 1px; }
.more { width: 10px; font-size: 13px; line-height: 14px; font-weight: 700; }

.stage { flex: 1; display: flex; min-height: 0; }
.vbar { width: 31px; flex: none; padding-left: 4px; display: flex; flex-direction: column; align-items: stretch; overflow: hidden; background: linear-gradient(to right, #ece9d8 4px, #f0eee0 4px, #e6e3d2); }
.vgrip { height: 2px; margin: 1px 3px 0; flex: none; background-image: linear-gradient(to right, #888 50%, transparent 50%); background-size: 3px 2px; }
.vsep { height: 1px; flex: none; margin: 6px 3px 0; background: #c0bdac; }
.vb { display: flex; flex-direction: column; align-items: center; flex: none; }
.vi { width: 16px; height: 16px; display: block; flex: none; }
.vb b { font-weight: 400; width: 14px; font-size: 13px; line-height: 14px; margin-top: 1px; text-align: center; }
.vb b.tight { line-height: 12px; font-size: 12px; }
.vb em { width: 0; height: 0; margin-top: 1px; border: 3px solid transparent; border-right: 4px solid #000; border-left: 0; }

.canvas { flex: 1; position: relative; background: #000; overflow: hidden; }
.scene { display: block; width: 648px; height: 683px; }
.dim { fill: #cfcfcf; font-family: "Liberation Sans", sans-serif; font-size: 17px; }
.dim.wide { font-size: 17px; letter-spacing: .5px; }
.axis { fill: #e0e0e0; font-family: "Liberation Sans", sans-serif; font-size: 17px; text-anchor: middle; }
.tip { position: absolute; left: 294px; top: 11px; width: 188px; height: 30px; padding: 0 4px; background: #191555; color: #c8c8c8; font-size: 12px; line-height: 15px; overflow: hidden; }

/* overlays */
.menu { position: absolute; left: 749px; top: 62px; width: 87px; height: 65px; padding: 2px 0 0 25px; background: #fff; border: 1px solid #a0a0a0; font-size: 12px; line-height: 20px; }
.markup { position: absolute; left: 0; top: 0; width: 1092px; height: 747px; pointer-events: none; }
.markup ellipse { fill: none; stroke: #e01010; stroke-width: 1.200; }
```
